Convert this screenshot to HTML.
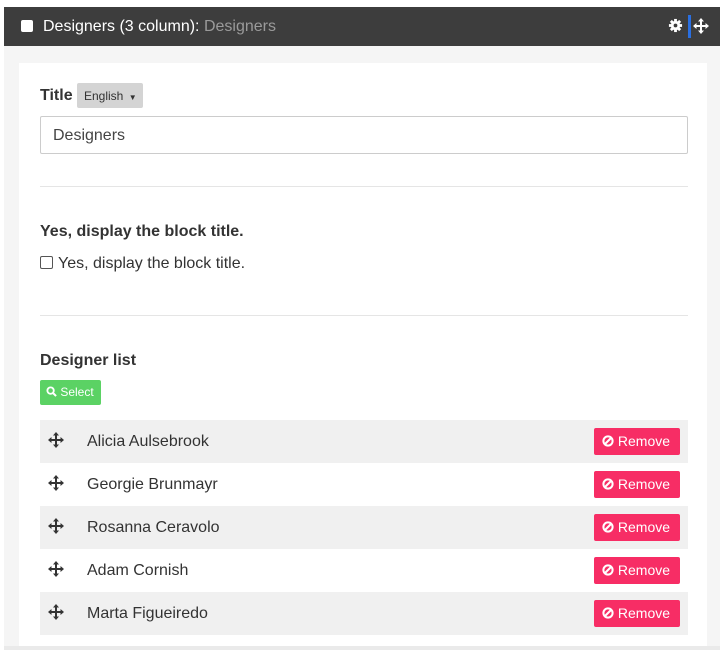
<!DOCTYPE html>
<html><head><style>
*{box-sizing:border-box}
body{margin:0;width:720px;height:650px;background:#fff;font-family:"Liberation Sans",sans-serif;color:#333;position:relative;overflow:hidden}
.hdr{position:absolute;left:4px;top:7px;width:716px;height:39px;background:#3d3d3d;color:#fff;font-size:16px}
.hdr .cb{position:absolute;left:17px;top:13px;width:12px;height:12px;background:#fff;border-radius:2px}
.hdr .t{position:absolute;left:39px;top:11px}
.hdr .t span{color:#9a9a9a}
.wrap{position:absolute;left:4px;top:46px;width:716px;height:604px;background:#f5f5f5}
.panel{position:absolute;left:19px;top:63px;width:688px;height:587px;background:#fff}
.abs{position:absolute}
.lbl{font-weight:bold;font-size:16px}
.input{position:absolute;left:40px;top:116px;width:648px;height:38px;border:1px solid #ccc;border-radius:2px;font-size:16px;padding:10px 12px;color:#444}
hr{position:absolute;left:40px;width:648px;border:0;border-top:1px solid #e5e5e5;margin:0}
.row{position:absolute;left:40px;width:648px;height:43px;font-size:16px}
.row.g{background:#f0f0f0}
.row .n{position:absolute;left:47px;top:13px}
.row .btn{position:absolute;left:554px;top:8px;width:86px;height:27px;background:#f72d65;color:#fff;border-radius:2px;font-size:14px;padding:5px 0 0 8px}
.row svg.mv{position:absolute;left:8px;top:12px}
</style></head><body>
<div class="hdr"><div class="cb"></div><div class="t">Designers (3 column): <span>Designers</span></div>
<svg class="abs" style="left:664px;top:11px" width="15" height="15" viewBox="0 0 16 16"><g fill="#fff"><circle cx="8" cy="8" r="5"/><rect x="6.5" y="1" width="3" height="14"/><rect x="1" y="6.5" width="14" height="3"/><rect x="6.5" y="1" width="3" height="14" transform="rotate(45 8 8)"/><rect x="6.5" y="1" width="3" height="14" transform="rotate(-45 8 8)"/></g><circle cx="8" cy="8" r="2" fill="#3d3d3d"/></svg>
<div class="abs" style="left:684px;top:8px;width:3px;height:23px;background:#2a6fe0"></div>
<svg class="abs" style="left:689px;top:11px" width="16" height="16" viewBox="0 0 16 16"><path fill="#fff" d="M8 0L11 3.5H9V7H12.5V5L16 8L12.5 11V9H9V12.5H11L8 16L5 12.5H7V9H3.5V11L0 8L3.5 5V7H7V3.5H5Z"/></svg>
</div>
<div class="wrap"></div>
<div class="panel"></div>
<div class="abs lbl" style="left:40px;top:87px">Title</div>
<div class="abs" style="left:77px;top:83px;width:66px;height:25px;background:#d4d4d4;border-radius:2px;font-size:12px;padding:6px 0 0 7px">English <span style="font-size:8px;margin-left:2px">▼</span></div>
<div class="input">Designers</div>
<hr style="top:186px">
<div class="abs lbl" style="left:40px;top:223px">Yes, display the block title.</div>
<div class="abs" style="left:40px;top:256px;width:13px;height:13px;border:1px solid #555;border-radius:2px"></div>
<div class="abs" style="left:58px;top:255px;font-size:16px">Yes, display the block title.</div>
<hr style="top:315px">
<div class="abs lbl" style="left:40px;top:352px">Designer list</div>
<div class="abs" style="left:40px;top:380px;width:61px;height:25px;background:#5bd264;border-radius:2px;color:#fff;font-size:12px;padding:5px 0 0 6px"><svg width="11" height="11" viewBox="0 0 12 12" style="vertical-align:-1px"><circle cx="5" cy="5" r="3.5" fill="none" stroke="#fff" stroke-width="2"/><path d="M7.5 7.5L11 11" stroke="#fff" stroke-width="2.2"/></svg> Select</div>

<div class="row g" style="top:420px"><svg class="mv" width="16" height="16" viewBox="0 0 16 16"><path fill="#333" d="M8 0L11 3.5H9V7H12.5V5L16 8L12.5 11V9H9V12.5H11L8 16L5 12.5H7V9H3.5V11L0 8L3.5 5V7H7V3.5H5Z"/></svg><div class="n">Alicia Aulsebrook</div><div class="btn"><svg width="12" height="12" viewBox="0 0 12 12" style="vertical-align:-1px"><circle cx="6" cy="6" r="4.6" fill="none" stroke="#fff" stroke-width="2"/><path d="M3 9L9 3" stroke="#fff" stroke-width="2"/></svg> Remove</div></div>
<div class="row" style="top:463px"><svg class="mv" width="16" height="16" viewBox="0 0 16 16"><path fill="#333" d="M8 0L11 3.5H9V7H12.5V5L16 8L12.5 11V9H9V12.5H11L8 16L5 12.5H7V9H3.5V11L0 8L3.5 5V7H7V3.5H5Z"/></svg><div class="n">Georgie Brunmayr</div><div class="btn"><svg width="12" height="12" viewBox="0 0 12 12" style="vertical-align:-1px"><circle cx="6" cy="6" r="4.6" fill="none" stroke="#fff" stroke-width="2"/><path d="M3 9L9 3" stroke="#fff" stroke-width="2"/></svg> Remove</div></div>
<div class="row g" style="top:506px"><svg class="mv" width="16" height="16" viewBox="0 0 16 16"><path fill="#333" d="M8 0L11 3.5H9V7H12.5V5L16 8L12.5 11V9H9V12.5H11L8 16L5 12.5H7V9H3.5V11L0 8L3.5 5V7H7V3.5H5Z"/></svg><div class="n">Rosanna Ceravolo</div><div class="btn"><svg width="12" height="12" viewBox="0 0 12 12" style="vertical-align:-1px"><circle cx="6" cy="6" r="4.6" fill="none" stroke="#fff" stroke-width="2"/><path d="M3 9L9 3" stroke="#fff" stroke-width="2"/></svg> Remove</div></div>
<div class="row" style="top:549px"><svg class="mv" width="16" height="16" viewBox="0 0 16 16"><path fill="#333" d="M8 0L11 3.5H9V7H12.5V5L16 8L12.5 11V9H9V12.5H11L8 16L5 12.5H7V9H3.5V11L0 8L3.5 5V7H7V3.5H5Z"/></svg><div class="n">Adam Cornish</div><div class="btn"><svg width="12" height="12" viewBox="0 0 12 12" style="vertical-align:-1px"><circle cx="6" cy="6" r="4.6" fill="none" stroke="#fff" stroke-width="2"/><path d="M3 9L9 3" stroke="#fff" stroke-width="2"/></svg> Remove</div></div>
<div class="row g" style="top:592px"><svg class="mv" width="16" height="16" viewBox="0 0 16 16"><path fill="#333" d="M8 0L11 3.5H9V7H12.5V5L16 8L12.5 11V9H9V12.5H11L8 16L5 12.5H7V9H3.5V11L0 8L3.5 5V7H7V3.5H5Z"/></svg><div class="n">Marta Figueiredo</div><div class="btn"><svg width="12" height="12" viewBox="0 0 12 12" style="vertical-align:-1px"><circle cx="6" cy="6" r="4.6" fill="none" stroke="#fff" stroke-width="2"/><path d="M3 9L9 3" stroke="#fff" stroke-width="2"/></svg> Remove</div></div>
<div class="abs" style="left:4px;top:646px;width:716px;height:4px;background:#eaeaea"></div>
</body></html>
